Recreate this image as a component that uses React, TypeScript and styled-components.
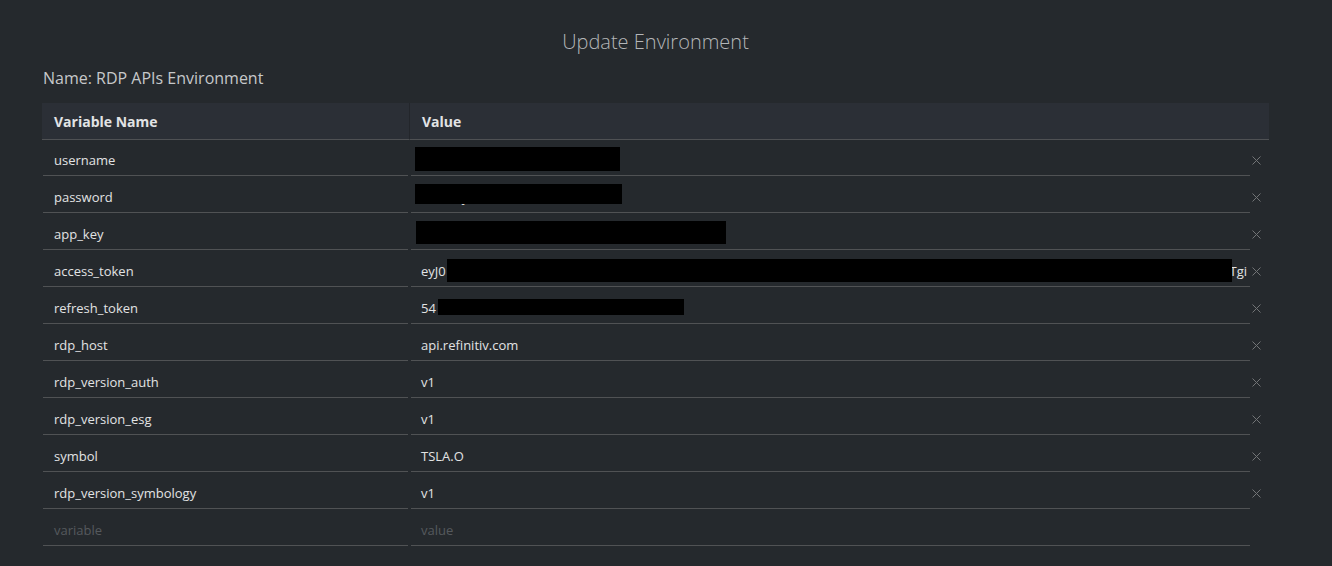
import React from "react";
import styled, { createGlobalStyle } from "styled-components";

const GlobalStyle = createGlobalStyle`
  html, body { margin: 0; padding: 0; background: #25292d; }
  body { font-family: "Open Sans", "Noto Sans", "Liberation Sans", sans-serif; color: #dcdcdc; }
  * { box-sizing: border-box; }
`;

const Page = styled.div`
  width: 1332px;
  height: 566px;
  padding: 28px 63px 0 42px;
  background: #25292d;
  overflow: hidden;
`;

const Title = styled.h1`
  margin: 0;
  text-align: center;
  font-size: 20px;
  line-height: 28px;
  font-weight: 300;
  color: #b4b6b8;
`;

const NameLabel = styled.div`
  margin-top: 11px;
  padding-left: 1px;
  font-size: 16px;
  line-height: 22px;
  color: #c6c8ca;
`;

const Table = styled.div`
  margin-top: 14px;
  display: grid;
  grid-template-columns: 367px 841px 19px;
`;

const HeadCell = styled.div<{ $divider?: boolean }>`
  height: 37px;
  background: #2b2f36;
  border-bottom: 1px solid #4f5154;
  border-left: ${(p) => (p.$divider ? "1px solid #23262b" : "none")};
  padding-left: 12px;
  display: flex;
  align-items: center;
  font-size: 14px;
  font-weight: 700;
  color: #e2e3e5;
`;

const Cell = styled.div<{ $pl: number; $pr: number }>`
  padding: 0 ${(p) => p.$pr}px 0 ${(p) => p.$pl}px;
`;

const Field = styled.div<{ $placeholder?: boolean; $first?: boolean }>`
  position: relative;
  height: ${(p) => (p.$first ? 36 : 37)}px;
  border-bottom: 1px solid #505254;
  padding: ${(p) => (p.$first ? 5 : 6)}px 3px 0 10px;
  font-size: 13px;
  line-height: 30px;
  white-space: nowrap;
  overflow: hidden;
  color: ${(p) => (p.$placeholder ? "#55595d" : "#e2e3e4")};
  display: flex;
  justify-content: space-between;
`;

const NameField = styled(Field)`
  padding-left: 11px;
`;

const Redact = styled.span<{ $x: number; $y: number; $w: number; $h: number }>`
  position: absolute;
  left: ${(p) => p.$x}px;
  top: ${(p) => p.$y}px;
  width: ${(p) => p.$w}px;
  height: ${(p) => p.$h}px;
  background: #000;
`;

const DeleteCell = styled.div<{ $first?: boolean }>`
  height: ${(p) => (p.$first ? 36 : 37)}px;
  padding: ${(p) => (p.$first ? 5 : 6)}px 0 0 2px;
  display: flex;
  align-items: center;
`;

const DeleteIcon = () => (
  <svg width="9" height="9" viewBox="0 0 9 9" style={{ display: "block" }}>
    <path d="M0.5 0.5 L8.5 8.5 M8.5 0.5 L0.5 8.5" stroke="#727476" strokeWidth="1" />
  </svg>
);

type Row = {
  name: string;
  value: string;
  tail?: string;
  redact?: { x: number; y: number; w: number; h: number };
};

const rows: Row[] = [
  { name: "username", value: "", redact: { x: 4, y: 7, w: 205, h: 24 } },
  { name: "password", value: "xxxxxxy", redact: { x: 4, y: 8, w: 207, h: 20 } },
  { name: "app_key", value: "", redact: { x: 5, y: 8, w: 310, h: 23 } },
  { name: "access_token", value: "eyJ0", tail: "Tgi", redact: { x: 36, y: 9, w: 785, h: 23 } },
  { name: "refresh_token", value: "54", redact: { x: 27, y: 12, w: 246, h: 16 } },
  { name: "rdp_host", value: "api.refinitiv.com" },
  { name: "rdp_version_auth", value: "v1" },
  { name: "rdp_version_esg", value: "v1" },
  { name: "symbol", value: "TSLA.O" },
  { name: "rdp_version_symbology", value: "v1" },
];

export default function App() {
  return (
    <>
      <GlobalStyle />
      <Page>
        <Title>Update Environment</Title>
        <NameLabel>Name: RDP APIs Environment</NameLabel>
        <Table>
          <HeadCell>Variable Name</HeadCell>
          <HeadCell $divider>Value</HeadCell>
          <HeadCell />
          {rows.map((r, i) => (
            <React.Fragment key={r.name}>
              <Cell $pl={1} $pr={1}>
                <NameField $first={i === 0}>{r.name}</NameField>
              </Cell>
              <Cell $pl={2} $pr={0}>
                <Field $first={i === 0}>
                  <span>{r.value}</span>
                  {r.tail && <span>{r.tail}</span>}
                  {r.redact && (
                    <Redact $x={r.redact.x} $y={r.redact.y} $w={r.redact.w} $h={r.redact.h} />
                  )}
                </Field>
              </Cell>
              <DeleteCell $first={i === 0}>
                <DeleteIcon />
              </DeleteCell>
            </React.Fragment>
          ))}
          <Cell $pl={1} $pr={1}>
            <NameField $placeholder>variable</NameField>
          </Cell>
          <Cell $pl={2} $pr={0}>
            <Field $placeholder>value</Field>
          </Cell>
          <DeleteCell />
        </Table>
      </Page>
    </>
  );
}
